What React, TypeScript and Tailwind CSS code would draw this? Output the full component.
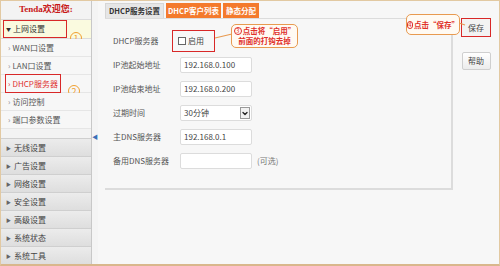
import { ChevronDown } from "lucide-react";
import React from "react";

const subItems = ["WAN口设置", "LAN口设置", "DHCP服务器", "访问控制", "端口参数设置"];
const groups = ["无线设置", "广告设置", "网络设置", "安全设置", "高级设置", "系统状态", "系统工具"];

function Circled({ n, className }: { n: string; className: string }) {
  return (
    <span
      className={
        "inline-flex items-center justify-center rounded-full border leading-none font-normal " + className
      }
    >
      {n}
    </span>
  );
}

function Sidebar() {
  return (
    <div className="w-[91px] flex flex-col bg-[#f3f3f3] border-r border-[#c8c8c8] whitespace-nowrap">
      <div className="h-[19px] flex items-center justify-center text-[9px] font-bold text-[#c81818] font-['Liberation_Serif','Noto_Sans_CJK_SC',serif] border-b border-[#dcdcdc]">
        Tenda欢迎您:
      </div>
      <div className="relative h-[19px] flex items-center bg-[#fafadf] border-b border-[#dcdcdc]">
        <div className="ml-[2px] w-[64px] h-[18px] border-[1.5px] border-[#d82828] flex items-center pl-[2px] text-[8px] text-[#333]">
          <span className="text-[5px] mr-[2px]">▼</span>上网设置
        </div>
        <Circled n="1" className="absolute left-[69px] top-[12px] w-[12px] h-[12px] text-[9px] border-[#f0a030] text-[#f0a030]" />
      </div>
      {subItems.map((s, i) => (
        <div
          key={s}
          className="relative h-[18px] flex items-center pl-[7px] text-[8px] text-[#555] bg-[#f7f7f7] border-b border-[#e6e6e6]"
        >
          {i === 2 ? (
            <>
              <div className="-ml-[3px] w-[56px] h-[19px] border-[1.5px] border-[#d82828] flex items-center pl-[2px] text-[#e03030]">
                <span className="mr-[2px]">›</span>DHCP服务器
              </div>
              <Circled n="2" className="absolute left-[67px] top-[10px] w-[12px] h-[12px] text-[9px] border-[#f0a030] text-[#f0a030]" />
            </>
          ) : (
            <>
              <span className="mr-[2px] text-[#888]">›</span>
              {s}
            </>
          )}
        </div>
      ))}
      <div className="flex-1" />
      {groups.map((g) => (
        <div
          key={g}
          className="h-[18px] flex items-center pl-[5px] text-[8px] text-[#444] bg-gradient-to-b from-[#ececec] to-[#dedede] border-t border-[#cfcfcf]"
        >
          <span className="text-[5px] mr-[3px] text-[#666]">▶</span>
          {g}
        </div>
      ))}
    </div>
  );
}

function Row({ label, children }: { label: string; children: React.ReactNode }) {
  return (
    <div className="h-[16px] flex items-center">
      <div className="w-[67px] text-[8px] text-[#555]">{label}</div>
      {children}
    </div>
  );
}

function Input({ value }: { value: string }) {
  return (
    <div className="w-[72px] h-[16px] bg-white border border-[#dcdcdc] rounded-[2px] flex items-center pl-[3px] text-[8px] text-[#444]">
      {value}
    </div>
  );
}

export default function App() {
  return (
    <div className="w-[500px] h-[266px] flex border border-[#e2c9a2] border-b-[2px] border-b-[#d9b78c] bg-[#f7f7f7] font-['Noto_Sans_CJK_SC','Liberation_Sans',sans-serif] overflow-hidden">
      <Sidebar />
      <div className="w-[6px] bg-[#f4f4f4] flex items-center justify-center">
        <span className="text-[6px] text-[#3b6fb8] mt-[8px]">◀</span>
      </div>
      <div className="relative flex-1 flex pt-[2px] whitespace-nowrap">
        <div className="ml-[7px] w-[348px] flex flex-col">
          <div className="h-[15px] flex items-end gap-[2px] text-[7.5px] font-bold">
            <div className="h-[15px] px-[3px] flex items-center bg-[#e6e6e6] text-[#333] border border-b-0 border-[#d6d6d6]">
              DHCP服务设置
            </div>
            <div className="h-[15px] px-[2px] flex items-center bg-[#f47a2c] text-white">DHCP客户列表</div>
            <div className="h-[15px] px-[3px] flex items-center bg-[#f47a2c] text-white">静态分配</div>
          </div>
          <div className="h-[172px] bg-[#f7f7f7] border border-l-0 border-[#dcdcdc] border-r-[2px] border-b-[2px] pt-[14px] pl-[8px] flex flex-col gap-[8px]">
            <Row label="DHCP服务器">
              <div className="-ml-[8px] -my-[3px] w-[43px] h-[22px] border-[1.5px] border-[#d82828] flex items-center pl-[5px] text-[8px] text-[#444]">
                <span className="w-[8px] h-[8px] border border-[#666] bg-white mr-[2px]" />
                启用
              </div>
            </Row>
            <Row label="IP池起始地址">
              <Input value="192.168.0.100" />
            </Row>
            <Row label="IP池结束地址">
              <Input value="192.168.0.200" />
            </Row>
            <Row label="过期时间">
              <div className="w-[72px] h-[16px] bg-white border border-[#dcdcdc] rounded-[2px] flex items-center justify-between pl-[3px] pr-[1px] text-[8px] text-[#444]">
                30分钟
                <span className="w-[10px] h-[12px] border border-[#999] bg-[#f2f2f2] flex items-center justify-center">
                  <ChevronDown size={9} strokeWidth={4} className="text-[#222]" />
                </span>
              </div>
            </Row>
            <Row label="主DNS服务器">
              <Input value="192.168.0.1" />
            </Row>
            <Row label="备用DNS服务器">
              <Input value="" />
              <span className="ml-[5px] text-[8px] text-[#777]">(可选)</span>
            </Row>
          </div>
        </div>
        <div className="flex-1 flex flex-col items-center pt-[15px] gap-[15px]">
          <div className="w-[30px] h-[19px] border-[1.5px] border-[#d82828] bg-[#f3f3f3] flex items-center justify-center text-[8px] text-[#444]">
            保存
          </div>
          <div className="w-[29px] h-[18px] border border-[#cfcfcf] rounded-[2px] bg-gradient-to-b from-white to-[#ececec] flex items-center justify-center text-[8px] text-[#444]">
            帮助
          </div>
        </div>

        <svg className="absolute left-0 top-0 pointer-events-none" width="402" height="60">
          <line x1="117" y1="37" x2="134" y2="33" stroke="#e89a50" strokeWidth="1.2" />
          <line x1="361" y1="22" x2="367" y2="24" stroke="#e89a50" strokeWidth="1.2" />
        </svg>
        <div className="absolute left-[133px] top-[23px] w-[67px] h-[24px] border-[1.5px] border-[#e89a50] rounded-[5px] bg-[#fffaf3] flex flex-col items-center justify-center text-[7.5px] leading-[10px] font-bold text-[#e0302a]">
          <span className="flex items-center">
            <Circled n="3" className="w-[8px] h-[8px] text-[6px] border-[#e0302a] mr-[1px]" />
            点击将“启用”
          </span>
          <span>前面的打钩去掉</span>
        </div>
        <div className="absolute left-[308px] top-[13px] w-[54px] h-[21px] border-[1.5px] border-[#e89a50] rounded-[5px] bg-[#fffaf3] flex items-center justify-center text-[7.5px] font-bold text-[#e0302a]">
          <Circled n="4" className="w-[8px] h-[8px] text-[6px] border-[#e0302a] mr-[1px]" />
          点击“保存”
        </div>
      </div>
    </div>
  );
}
